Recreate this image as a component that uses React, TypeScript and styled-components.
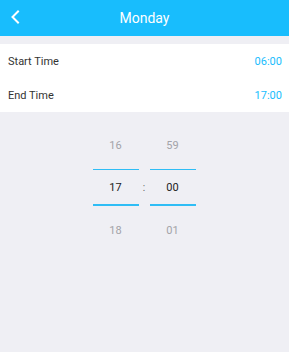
import React from "react";
import styled, { createGlobalStyle } from "styled-components";

const Global = createGlobalStyle`
  html, body { margin: 0; padding: 0; }
  body { background: #efeff4; font-family: Roboto, "Liberation Sans", sans-serif; }
`;

const Page = styled.div`
  width: 289px;
  height: 352px;
  background: #efeff4;
  display: flex;
  flex-direction: column;
`;

const Header = styled.div`
  height: 36px;
  background: #18bdfd;
  display: flex;
  align-items: center;
  justify-content: center;
  position: relative;
  color: #fff;
  font-size: 14px;
`;

const Back = styled.div`
  position: absolute;
  left: 9px;
  top: 10px;
  width: 12px;
  height: 14px;
  display: flex;
`;

const Section = styled.div`
  margin-top: 8px;
  background: #fff;
  display: flex;
  flex-direction: column;
`;

const Row = styled.div`
  height: 34px;
  display: flex;
  align-items: center;
  justify-content: space-between;
  padding: 0 7px 0 8px;
  font-size: 11px;
`;

const Label = styled.span`
  color: #333;
`;

const Value = styled.span`
  color: #18bdfd;
`;

const Picker = styled.div`
  display: flex;
  justify-content: center;
  align-items: flex-start;
  margin-top: 9px;
  padding-right: 1px;
`;

const Column = styled.div`
  width: 46px;
  display: flex;
  flex-direction: column;
`;

const Item = styled.div<{ $active?: boolean }>`
  height: ${(p) => (p.$active ? "34px" : "48px")};
  display: flex;
  align-items: center;
  justify-content: center;
  font-size: 11px;
  color: ${(p) => (p.$active ? "#222" : "#a3a3a8")};
  border-top: ${(p) => (p.$active ? "1px solid #2fbdf5" : "none")};
  border-bottom: ${(p) => (p.$active ? "2px solid #2fbdf5" : "none")};
`;

const Colon = styled.div`
  width: 11px;
  height: 37px;
  margin-top: 48px;
  display: flex;
  align-items: center;
  justify-content: center;
  font-size: 10px;
  color: #666;
`;

const Column2 = ({ vals }: { vals: string[] }) => (
  <Column>
    <Item>{vals[0]}</Item>
    <Item $active>{vals[1]}</Item>
    <Item>{vals[2]}</Item>
  </Column>
);

export default function App() {
  return (
    <Page>
      <Global />
      <Header>
        <Back>
          <svg width="12" height="14" viewBox="0 0 12 14">
            <path d="M9 1.5 L3.5 7 L9 12.5" fill="none" stroke="#fff" strokeWidth="2" strokeLinecap="square" />
          </svg>
        </Back>
        Monday
      </Header>
      <Section>
        <Row>
          <Label>Start Time</Label>
          <Value>06:00</Value>
        </Row>
        <Row>
          <Label>End Time</Label>
          <Value>17:00</Value>
        </Row>
      </Section>
      <Picker>
        <Column2 vals={["16", "17", "18"]} />
        <Colon>:</Colon>
        <Column2 vals={["59", "00", "01"]} />
      </Picker>
    </Page>
  );
}
